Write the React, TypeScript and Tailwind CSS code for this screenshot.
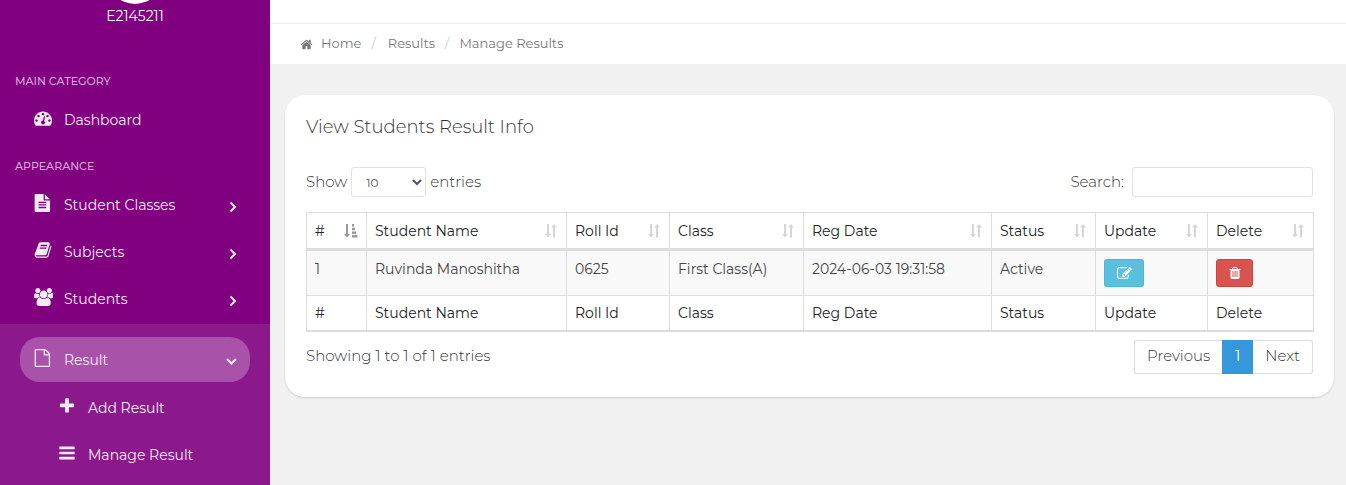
import React from "react";

type IconProps = { d: string; className: string; viewBox?: string };

const Glyph = ({ d, className, viewBox = "0 0 1792 1792" }: IconProps) => (
  <svg aria-hidden="true" viewBox={viewBox} className={className} fill="currentColor">
    <path d={d} />
  </svg>
);

const paths = {
  dashboard:
    "M384 1152q0-53-37.5-90.5t-90.5-37.5-90.5 37.5-37.5 90.5 37.5 90.5 90.5 37.5 90.5-37.5 37.5-90.5zm192-448q0-53-37.5-90.5t-90.5-37.5-90.5 37.5-37.5 90.5 37.5 90.5 90.5 37.5 90.5-37.5 37.5-90.5zm428 481l101-382q6-26-7.5-48.5t-38.5-29.5-48 6.5-30 39.5l-101 382q-60 5-107 43.5t-63 98.5q-20 77 20 146t117 89 146-20 89-117q16-60-6-117t-72-91zm660-33q0-53-37.5-90.5t-90.5-37.5-90.5 37.5-37.5 90.5 37.5 90.5 90.5 37.5 90.5-37.5 37.5-90.5zm-640-640q0-53-37.5-90.5t-90.5-37.5-90.5 37.5-37.5 90.5 37.5 90.5 90.5 37.5 90.5-37.5 37.5-90.5zm448 192q0-53-37.5-90.5t-90.5-37.5-90.5 37.5-37.5 90.5 37.5 90.5 90.5 37.5 90.5-37.5 37.5-90.5zm320 448q0 261-141 483-19 29-54 29h-1402q-35 0-54-29-141-221-141-483 0-182 71-348t191-286 286-191 348-71 348 71 286 191 191 286 71 348z",
  fileText:
    "M1596 476q14 14 28 36h-472v-472q22 14 36 28zm-476 164h544v1056q0 40-28 68t-68 28h-1344q-40 0-68-28t-28-68v-1600q0-40 28-68t68-28h800v544q0 40 28 68t68 28zm160 736v-64q0-14-9-23t-23-9h-704q-14 0-23 9t-9 23v64q0 14 9 23t23 9h704q14 0 23-9t9-23zm0-256v-64q0-14-9-23t-23-9h-704q-14 0-23 9t-9 23v64q0 14 9 23t23 9h704q14 0 23-9t9-23zm0-256v-64q0-14-9-23t-23-9h-704q-14 0-23 9t-9 23v64q0 14 9 23t23 9h704q14 0 23-9t9-23z",
  book: "M1703 478q40 57 18 129l-275 906q-19 64-76.5 107.5t-122.5 43.5h-923q-77 0-148.5-53.5t-99.5-131.5q-24-67-2-127 0-4 3-27t4-37q1-8-3-21.5t-3-19.5q2-11 8-21t16.5-23.5 16.5-23.5q23-38 45-91.5t30-91.5q3-10 .5-30t-.5-28q3-11 17-28t17-23q21-36 42-92t25-90q1-9-2.5-32t.5-28q4-13 22-30.5t22-22.5q19-26 42.5-84.5t27.5-96.5q1-8-3-25.5t-2-26.5q2-8 9-18t18-23 17-21q8-12 16.5-30.5t15-35 16-36 19.5-32 26.5-23.5 36-11.5 47.5 5.5l-1 3q38-9 51-9h761q74 0 114 56t18 130l-274 906q-36 119-71.5 153.5t-128.5 34.5h-869q-27 0-38 15-11 16-1 43 24 70 144 70h923q29 0 56-15.5t35-41.5l300-987q7-22 5-57 38 15 59 43zm-1064 2q-4 13 2 22.5t20 9.5h608q13 0 25.5-9.5t16.5-22.5l21-64q4-13-2-22.5t-20-9.5h-608q-13 0-25.5 9.5t-16.5 22.5zm-83 256q-4 13 2 22.5t20 9.5h608q13 0 25.5-9.5t16.5-22.5l21-64q4-13-2-22.5t-20-9.5h-608q-13 0-25.5 9.5t-16.5 22.5z",
  users:
    "M593 896q-162 5-265 128h-134q-82 0-138-40.5t-56-118.5q0-353 124-353 6 0 43.5 21t97.5 42.5 119 21.5q67 0 133-23-5 37-5 66 0 159 90 292zm1071 637q0 120-73 189.5t-194 69.5h-874q-121 0-194-69.5t-73-189.5q0-53 3.5-103.5t14-109 26.5-108.5 43-97.5 62-81 85.5-53.5 111.5-20q10 0 43 21.5t73 48 107 48 135 21.5 135-21.5 107-48 73-48 43-21.5q61 0 111.5 20t85.5 53.5 62 81 43 97.5 26.5 108.5 14 109 3.5 103.5zm-1024-1277q0 106-75 181t-181 75-181-75-75-181 75-181 181-75 181 75 75 181zm704 384q0 159-112.5 271.5t-271.5 112.5-271.5-112.5-112.5-271.5 112.5-271.5 271.5-112.5 271.5 112.5 112.5 271.5zm576 225q0 78-56 118.5t-138 40.5h-134q-103-123-265-128 90-133 90-292 0-29-5-66 66 23 133 23 59 0 119-21.5t97.5-42.5 43.5-21q124 0 124 353zm-128-609q0 106-75 181t-181 75-181-75-75-181 75-181 181-75 181 75 75 181z",
  file: "M1596 380q28 28 48 76t20 88v1152q0 40-28 68t-68 28h-1344q-40 0-68-28t-28-68v-1600q0-40 28-68t68-28h896q40 0 88 20t76 48zm-444-244v376h376q-10-29-22-41l-313-313q-12-12-41-22zm384 1528v-1024h-416q-40 0-68-28t-28-68v-416h-768v1536h1280z",
  plus: "M1600 736v192q0 40-28 68t-68 28h-416v416q0 40-28 68t-68 28h-192q-40 0-68-28t-28-68v-416h-416q-40 0-68-28t-28-68v-192q0-40 28-68t68-28h416v-416q0-40 28-68t68-28h192q40 0 68 28t28 68v416h416q40 0 68 28t28 68z",
  bars: "M1664 1344v128q0 26-19 45t-45 19h-1408q-26 0-45-19t-19-45v-128q0-26 19-45t45-19h1408q26 0 45 19t19 45zm0-512v128q0 26-19 45t-45 19h-1408q-26 0-45-19t-19-45v-128q0-26 19-45t45-19h1408q26 0 45 19t19 45zm0-512v128q0 26-19 45t-45 19h-1408q-26 0-45-19t-19-45v-128q0-26 19-45t45-19h1408q26 0 45 19t19 45z",
  home: "M1472 992v480q0 26-19 45t-45 19h-384v-384h-256v384h-384q-26 0-45-19t-19-45v-480q0-1 .5-3t.5-3l575-474 575 474q1 2 1 6zm223-69l-62 74q-8 9-21 11h-3q-13 0-21-7l-692-577-692 577q-12 8-24 7-13-2-21-11l-62-74q-8-10-7-23.5t11-21.5l719-599q32-26 76-26t76 26l244 204v-195q0-14 9-23t23-9h192q14 0 23 9t9 23v408l219 182q10 8 11 21.5t-7 23.5z",
  edit: "M888 1184l116-116-152-152-116 116v56h96v96h56zm440-720q-16-16-33 1l-350 350q-17 17-1 33t33-1l350-350q17-17 1-33zm80 594v190q0 119-84.5 203.5t-203.5 84.5h-832q-119 0-203.5-84.5t-84.5-203.5v-832q0-119 84.5-203.5t203.5-84.5h832q63 0 117 25 15 7 18 23 3 17-9 29l-49 49q-14 14-32 8-23-6-45-6h-832q-66 0-113 47t-47 113v832q0 66 47 113t113 47h832q66 0 113-47t47-113v-126q0-13 9-22l64-64q15-15 35-7t20 29zm-96-738l288 288-672 672h-288v-288zm444 132l-92 92-288-288 92-92q28-28 68-28t68 28l152 152q28 28 28 68t-28 68z",
  trash:
    "M704 1376v-704q0-14-9-23t-23-9h-64q-14 0-23 9t-9 23v704q0 14 9 23t23 9h64q14 0 23-9t9-23zm256 0v-704q0-14-9-23t-23-9h-64q-14 0-23 9t-9 23v704q0 14 9 23t23 9h64q14 0 23-9t9-23zm256 0v-704q0-14-9-23t-23-9h-64q-14 0-23 9t-9 23v704q0 14 9 23t23 9h64q14 0 23-9t9-23zm-544-992h448l-48-117q-7-9-17-11h-317q-10 2-17 11zm928 32v64q0 14-9 23t-23 9h-96v948q0 83-47 143.5t-113 60.5h-832q-66 0-113-58.5t-47-141.5v-952h-96q-14 0-23-9t-9-23v-64q0-14 9-23t23-9h309l70-167q15-37 54-63t79-26h320q40 0 79 26t54 63l70 167h309q14 0 23 9t9 23z",
};

const Chevron = ({ open = false }: { open?: boolean }) => (
  <svg
    aria-hidden="true"
    viewBox="0 0 12 12"
    className="mt-1 ml-auto size-3"
    fill="none"
    stroke="currentColor"
    strokeWidth="2"
  >
    <path d={open ? "M1 3 5.500 7.500l4.500-4.500" : "M4.500 1.500 9 6l-4.500 4.500"} />
  </svg>
);

const SortIcon = ({ active = false }: { active?: boolean }) =>
  active ? (
    <svg aria-hidden="true" viewBox="0 0 14 14" className="size-[14px] shrink-0 text-[#999]" fill="currentColor">
      <path d="M2 0h2v10h2l-3 3.500L0 10h2zM8 0h2v2.500H8zM8 3.700h3v2.500H8zM8 7.400h4.200v2.500H8zM8 11h5.500v2.500H8z" />
    </svg>
  ) : (
    <svg aria-hidden="true" viewBox="0 0 14 14" className="size-[14px] shrink-0 text-[#d6d6d6]" fill="currentColor">
      <path d="M3 0h2v10h2l-3 3.500L1 10h2zM9 13.500h2V3.500h2L10 0L7 3.500h2z" />
    </svg>
  );

const mainItem = "flex h-[45px] items-center rounded-[20px] pr-3 pl-[14px] text-sm";

const NavItem = ({ icon, label, className }: { icon: string; label: string; className: string }) => (
  <a href="#" className={mainItem + " " + className}>
    <span className="mb-1 w-[30px] shrink-0">
      <Glyph
        d={icon}
        className="h-[18px] w-auto"
        viewBox={
          icon === paths.users
            ? "0 0 1920 1792"
            : icon === paths.fileText || icon === paths.file
              ? "64 0 1664 1792"
              : "0 0 1792 1792"
        }
      />
    </span>
    {label}
    {label !== "Dashboard" && <Chevron open={label === "Result"} />}
  </a>
);

const SubItem = ({ icon, label }: { icon: string; label: string }) => (
  <a href="#" className="flex h-[47px] items-center pl-[58px] text-sm">
    <Glyph d={icon} className="mr-3 mb-1 size-[18px] shrink-0" />
    {label}
  </a>
);

const columns = ["#", "Student Name", "Roll Id", "Class", "Reg Date", "Status", "Update", "Delete"];
const cell = "border border-[#ddd] px-2 text-left font-normal whitespace-nowrap";

export default function App() {
  return (
    <div className="flex h-screen overflow-hidden bg-[#f1f1f1] font-['Montserrat','Inter',sans-serif] text-[#444]">
      <aside className="flex w-[270px] shrink-0 flex-col bg-[#800080] text-[#f5ebf5]">
        <div className="flex h-1 items-end justify-center overflow-hidden">
          <div className="size-[56px] shrink-0 rounded-full bg-white" />
        </div>
        <p className="pt-0.5 text-center text-sm leading-5 text-white">E2145211</p>
        <nav className="flex grow flex-col">
          <h2 className="mt-[47px] px-[15px] text-[11px] leading-4 font-medium text-[#d5a6d5]">MAIN CATEGORY</h2>
          <NavItem icon={paths.dashboard} label="Dashboard" className="mx-5 mt-2" />
          <h2 className="mt-4 px-[15px] text-[11px] leading-4 font-medium text-[#d5a6d5]">APPEARANCE</h2>
          <div className="mx-5 mt-2 flex flex-col gap-0.5 pb-[3px]">
            <NavItem icon={paths.fileText} label="Student Classes" className="" />
            <NavItem icon={paths.book} label="Subjects" className="" />
            <NavItem icon={paths.users} label="Students" className="" />
          </div>
          <div className="grow bg-[#8c198c] pt-[13px]">
            <NavItem icon={paths.file} label="Result" className="mx-5 mb-[2px] bg-[#a952a9]" />
            <SubItem icon={paths.plus} label="Add Result" />
            <SubItem icon={paths.bars} label="Manage Result" />
          </div>
        </nav>
      </aside>

      <main className="min-w-0 grow">
        <div className="h-6 border-b border-[#eee] bg-white" />
        <nav aria-label="Breadcrumb" className="flex h-10 items-center bg-white px-[30px] text-[13px] text-[#777]">
          <Glyph d={paths.home} className="mr-2 size-[13px]" />
          <a href="#">Home</a>
          <span className="mr-3 ml-[10px] text-[#ccc]">/</span>
          <a href="#">Results</a>
          <span className="mx-[10px] text-[#ccc]">/</span>
          <span>Manage Results</span>
        </nav>

        <section className="mt-[31px] mr-3 ml-[15px] rounded-[20px] bg-white px-[21px] pt-5 pb-[23px] shadow-[0_1px_2px_rgba(0,0,0,0.15)]">
          <h1 className="text-lg leading-6 font-light text-[#333]">View Students Result Info</h1>

          <div className="mt-7 flex items-center justify-between text-[15px] font-light text-[#333]">
            <label className="flex items-center gap-1">
              Show
              <select
                defaultValue="10"
                className="h-[30px] w-[75px] rounded-[3px] border border-[#e1e1e1] bg-white pl-[10px] text-xs font-normal text-[#555]"
              >
                <option>10</option>
                <option>25</option>
                <option>50</option>
              </select>
              entries
            </label>
            <label className="flex items-center gap-2">
              Search:
              <input type="search" className="h-[30px] w-[181px] rounded-[3px] border border-[#e1e1e1] px-3" />
            </label>
          </div>

          <table className="mt-[15px] w-full table-fixed border-collapse border-b-2 border-[#ddd] text-sm text-[#444]">
            <colgroup>
              <col className="w-[60px]" />
              <col className="w-[200px]" />
              <col className="w-[103px]" />
              <col className="w-[134px]" />
              <col className="w-[188px]" />
              <col className="w-[104px]" />
              <col className="w-[112px]" />
              <col className="w-[106px]" />
            </colgroup>
            <thead className="text-[#222]">
              <tr className="h-[37px]">
                {columns.map((name) => (
                  <th key={name} scope="col" className={cell + " border-b-[3px]"}>
                    <span className="flex items-center justify-between">
                      {name}
                      <SortIcon active={name === "#"} />
                    </span>
                  </th>
                ))}
              </tr>
            </thead>
            <tbody>
              <tr className="h-[46px] bg-[#f9f9f9] align-top leading-5">
                <td className={cell + " pt-2"}>1</td>
                <td className={cell + " pt-2"}>Ruvinda Manoshitha</td>
                <td className={cell + " pt-2"}>0625</td>
                <td className={cell + " pt-2"}>First Class(A)</td>
                <td className={cell + " pt-2"}>2024-06-03 19:31:58</td>
                <td className={cell + " pt-2"}>Active</td>
                <td className={cell + " pt-2"}>
                  <button
                    aria-label="Update"
                    className="flex h-7 w-10 items-center justify-center rounded-[3px] border border-[#46b8da] bg-[#5bc0de] text-white"
                  >
                    <Glyph d={paths.edit} className="size-[15px]" />
                  </button>
                </td>
                <td className={cell + " pt-2"}>
                  <button
                    aria-label="Delete"
                    className="flex h-7 w-[37px] items-center justify-center rounded-[3px] border border-[#d43f3a] bg-[#d9534f] text-white"
                  >
                    <Glyph d={paths.trash} className="size-[14px]" />
                  </button>
                </td>
              </tr>
            </tbody>
            <tfoot className="text-[#222]">
              <tr className="h-[35px]">
                {columns.map((name) => (
                  <th key={name} scope="col" className={cell + " border-b-2"}>
                    {name}
                  </th>
                ))}
              </tr>
            </tfoot>
          </table>

          <div className="mt-2 flex items-center justify-between text-[15px] font-light text-[#333]">
            <p>Showing 1 to 1 of 1 entries</p>
            <div className="flex h-[34px]">
              <button className="rounded-l-[3px] border border-r-0 border-[#ddd] px-3">Previous</button>
              <button className="w-[31px] bg-[#3498db] font-normal text-white">1</button>
              <button className="rounded-r-[3px] border border-l-0 border-[#ddd] px-3">Next</button>
            </div>
          </div>
        </section>
      </main>
    </div>
  );
}
